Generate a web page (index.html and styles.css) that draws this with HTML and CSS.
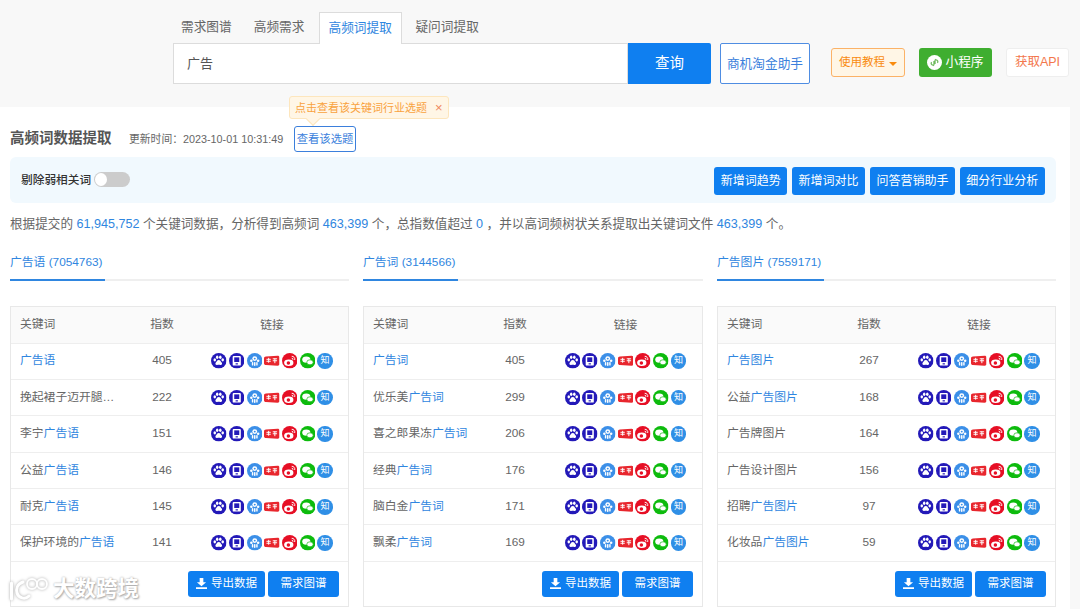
FILE: index.html
```html
<!DOCTYPE html>
<html lang="zh">
<head>
<meta charset="utf-8">
<title>高频词数据提取</title>
<link rel="stylesheet" href="styles.css">
</head>
<body>
<svg class="defs">
  <symbol id="i-baidu" viewBox="0 0 16 16"><circle cx="8" cy="8" r="8" fill="#2319b8"/><g fill="#fff"><ellipse cx="3.900" cy="7" rx="1.300" ry="1.700"/><ellipse cx="6.400" cy="4.400" rx="1.300" ry="1.800"/><ellipse cx="9.600" cy="4.400" rx="1.300" ry="1.800"/><ellipse cx="12.100" cy="7" rx="1.300" ry="1.700"/><path d="M8 7.300c-1.600 0-2 1.500-3 2.500-1 1.200-.2 2.700 1.300 2.500.7-.1 1.200-.3 1.700-.3s1 .2 1.700.3c1.500.2 2.300-1.300 1.300-2.500-1-1-1.400-2.500-3-2.500z"/></g></symbol>
  <symbol id="i-phone" viewBox="0 0 16 16"><circle cx="8" cy="8" r="8" fill="#2319b8"/><rect x="3.800" y="3" width="8.400" height="10" rx="1" fill="#fff"/><rect x="5.400" y="4.500" width="5.200" height="4.800" fill="#2319b8"/><rect x="6.800" y="10.600" width="2.400" height="1.200" fill="#2319b8"/></symbol>
  <symbol id="i-so" viewBox="0 0 16 16"><circle cx="8" cy="8" r="8" fill="#3b8fe8"/><g fill="#fff"><circle cx="8" cy="5.800" r="2.500"/><circle cx="4.500" cy="8" r="1.300"/><circle cx="11.500" cy="8" r="1.300"/><rect x="5" y="9.400" width="1.500" height="3.600" rx=".7"/><rect x="7.250" y="9.400" width="1.500" height="4" rx=".7"/><rect x="9.500" y="9.400" width="1.500" height="3.600" rx=".7"/></g><circle cx="8" cy="5.800" r="1" fill="#3b8fe8"/></symbol>
  <symbol id="i-tt" viewBox="0 0 16 16"><path d="M2 3.500 14 2.800c1.200 0 2 .7 2 1.800v6.800c0 1.100-.8 1.800-2 1.800L2 12.500C.8 12.400 0 11.700 0 10.600V5.400C0 4.300.8 3.600 2 3.500z" fill="#e8262d"/><rect x="2.500" y="6" width="4.500" height="1" fill="#fff"/><rect x="2.500" y="8" width="4.500" height="1" fill="#fff"/><rect x="4.300" y="5" width="1" height="5" fill="#fff"/><rect x="9" y="5.500" width="4.500" height="1" fill="#fff"/><rect x="9" y="7.500" width="4.500" height="1" fill="#fff"/><rect x="10.700" y="5.500" width="1" height="5" fill="#fff"/></symbol>
  <symbol id="i-weibo" viewBox="0 0 16 16"><circle cx="8" cy="8" r="8" fill="#e60f25"/><ellipse cx="7" cy="10" rx="4.800" ry="3.300" fill="#fff"/><circle cx="6.600" cy="10.200" r="1.800" fill="#e60f25"/><path d="M10 3.400a3 3 0 0 1 3.100 3.800M10 5.400a1.300 1.300 0 0 1 1.300 1.600" stroke="#fff" stroke-width="1" fill="none"/></symbol>
  <symbol id="i-wx" viewBox="0 0 16 16"><circle cx="8" cy="8" r="8" fill="#0dbb0d"/><ellipse cx="6.500" cy="6.800" rx="4.200" ry="3.300" fill="#fff"/><ellipse cx="10.300" cy="9.600" rx="3.300" ry="2.600" fill="#fff" stroke="#0dbb0d" stroke-width=".7"/></symbol>
  <symbol id="i-download" viewBox="0 0 12 12"><path d="M4 0h4v4.500h3L6 9 1 4.500h3zM0 10.200h12V12H0z" fill="#fff"/></symbol>
</svg>

<header class="top">
  <div class="top-inner">
    <div class="search-col">
      <nav class="tabs">
        <span class="tab">需求图谱</span>
        <span class="tab">高频需求</span>
        <span class="tab tab-on">高频词提取</span>
        <span class="tab tab-last">疑问词提取</span>
      </nav>
      <div class="search">
        <div class="search-input">广告</div>
        <div class="search-btn">查询</div>
      </div>
    </div>
    <div class="helper">商机淘金助手</div>
    <div class="tools">
      <span class="tool tool-orange">使用教程<i class="caret"></i></span>
      <span class="tool tool-green"><svg class="mini" viewBox="0 0 14 14"><circle cx="7" cy="7" r="7" fill="#fff"/><path d="M5.500 9.500a1.700 1.700 0 0 1-1.200-2.800M6.500 5.500v3.400a1.600 1.600 0 0 1-1 1M7.500 8.500V5.100a1.600 1.600 0 0 1 1-1M8.500 4.500a1.700 1.700 0 0 1 1.200 2.800" stroke="#6fba5f" stroke-width="1.200" fill="none"/></svg>小程序</span>
      <span class="tool tool-api">获取API</span>
    </div>
  </div>
</header>

<main class="panel">
  <div class="tip">点击查看该关键词行业选题<span class="tip-x">×</span></div>
  <div class="title-row">
    <h1 class="title">高频词数据提取</h1>
    <span class="updated">更新时间：2023-10-01 10:31:49</span>
    <span class="topic-btn">查看该选题</span>
  </div>
  <div class="filter">
    <div class="filter-left"><b class="filter-label">剔除弱相关词</b><span class="switch"></span></div>
    <div class="filter-right">
      <span class="btn">新增词趋势</span><span class="btn">新增词对比</span><span class="btn">问答营销助手</span><span class="btn">细分行业分析</span>
    </div>
  </div>
  <p class="summary">根据提交的 <a>61,945,752</a> 个关键词数据，分析得到高频词 <a>463,399</a> 个，总指数值超过 <a>0</a> ，并以高词频树状关系提取出关键词文件 <a>463,399</a> 个。</p>

  <div class="cols" id="cols"></div>
</main>

<div class="mark"><svg class="mark-logo" viewBox="0 0 40 24"><g fill="none" stroke="#fff" stroke-linecap="round"><path d="M2.500 6v16" stroke-width="3"/><path d="M14 5C8 7 7 12 8 16c1.500 5 8 7 12 3" stroke-width="3"/><circle cx="23" cy="7" r="5" stroke-width="1.800"/><circle cx="33" cy="7" r="5" stroke-width="1.800"/></g></svg><span>大数跨境</span></div>

<script src="app.js"></script>
</body>
</html>
```
FILE: app.js
```js
var data = [
  { tab: '广告语 (7054763)', rows: [
    [['广告语', 1], 405], [['挽起裙子迈开腿…', 0], 222], [['李宁', 0, '广告语', 1], 151],
    [['公益', 0, '广告语', 1], 146], [['耐克', 0, '广告语', 1], 145], [['保护环境的', 0, '广告语', 1], 141]
  ]},
  { tab: '广告词 (3144566)', rows: [
    [['广告词', 1], 405], [['优乐美', 0, '广告词', 1], 299], [['喜之郎果冻', 0, '广告词', 1], 206],
    [['经典', 0, '广告词', 1], 176], [['脑白金', 0, '广告词', 1], 171], [['飘柔', 0, '广告词', 1], 169]
  ]},
  { tab: '广告图片 (7559171)', rows: [
    [['广告图片', 1], 267], [['公益', 0, '广告图片', 1], 168], [['广告牌图片', 0], 164],
    [['广告设计图片', 0], 156], [['招聘', 0, '广告图片', 1], 97], [['化妆品', 0, '广告图片', 1], 59]
  ]}
];
var ids = ['i-baidu', 'i-phone', 'i-so', 'i-tt', 'i-weibo', 'i-wx'];
var icons = ids.map(function (id) {
  return '<svg class="ic"><use href="#' + id + '"/></svg>';
}).join('') + '<span class="ic ic-zhi">知</span>';

document.getElementById('cols').innerHTML = data.map(function (c) {
  var rows = c.rows.map(function (r) {
    var word = '';
    for (var i = 0; i < r[0].length; i += 2) {
      word += r[0][i + 1] ? '<a>' + r[0][i] + '</a>' : r[0][i];
    }
    return '<div class="row"><div class="c-word">' + word + '</div><div class="c-num">' + r[1] +
      '</div><div class="c-links">' + icons + '</div></div>';
  }).join('');
  return '<section class="col">' +
    '<div class="col-tabs"><span class="col-tab">' + c.tab + '</span></div>' +
    '<div class="table">' +
    '<div class="row row-head"><div class="c-word">关键词</div><div class="c-num">指数</div><div class="c-links c-links-head">链接</div></div>' +
    rows +
    '<div class="table-foot"><span class="btn btn-foot btn-export"><svg class="dl"><use href="#i-download"/></svg>导出数据</span><span class="btn btn-foot">需求图谱</span></div>' +
    '</div></section>';
}).join('');
```
FILE: styles.css
```css
* { box-sizing: border-box; }
html, body { margin: 0; height: 100%; }
body {
  width: 1080px;
  height: 609px;
  overflow: hidden;
  position: relative;
  background: #f8f8f8;
  color: #666;
  font: 12px/1.5 "Liberation Sans", "Noto Sans CJK SC", sans-serif;
}
a { color: #2f86e0; }
.defs { display: none; }

.top { height: 107px; padding: 12px 0 0 173px; }
.top-inner { display: flex; align-items: flex-start; }
.search-col { width: 538px; }
.tabs { display: flex; gap: 2px; height: 31px; margin-left: -2px; }
.tab {
  padding: 0 10px;
  font-size: 12.700px;
  line-height: 30px;
  color: #666;
}
.tab-on {
  background: #fff;
  color: #2f86e0;
  border: 1px solid #dcdcdc;
  border-bottom: 0;
  padding: 0 9px;
  line-height: 31px;
  margin-left: 2px;
  position: relative;
  z-index: 1;
  height: 32px;
}
.tab-last { margin-left: 1.500px; }
.search { display: flex; height: 41px; }
.search-input {
  flex: 1;
  background: #fff;
  border: 1px solid #dcdcdc;
  padding-left: 13px;
  font-size: 13px;
  line-height: 40px;
  color: #555;
}
.search-btn {
  width: 83px;
  background: #0f7ff0;
  border-radius: 0 2px 2px 0;
  color: #fff;
  font-size: 14.500px;
  line-height: 40px;
  text-align: center;
}
.helper {
  margin: 31px 0 0 9px;
  width: 90px;
  height: 41px;
  border: 1px solid #4f8de2;
  border-radius: 2px;
  background: #fff;
  color: #3b7fdc;
  font-size: 12.700px;
  line-height: 40px;
  text-align: center;
  white-space: nowrap;
}
.tools { display: flex; align-items: center; margin: 36px 0 0 21px; }
.tool {
  display: flex;
  align-items: center;
  justify-content: center;
  height: 29px;
  border-radius: 3px;
}
.tool-orange {
  width: 74px;
  background: #fff6e6;
  border: 1px solid #fbb267;
  color: #f98b0e;
  font-size: 11.500px;
}
.caret {
  margin: 2px 0 0 4px;
  border: 4px solid transparent;
  border-top-color: #f98b0e;
  border-bottom: 0;
}
.tool-green {
  width: 73px;
  margin-left: 14px;
  background: #3fae30;
  color: #fff;
  font-size: 12.700px;
}
.mini { width: 15px; height: 15px; margin-right: 3px; }
.tool-api {
  width: 63px;
  margin-left: 14px;
  background: #fff;
  border: 1px solid #eee;
  color: #f3774c;
  font-size: 12.500px;
}

.panel {
  position: relative;
  width: 1070px;
  height: 502px;
  background: #fff;
  padding: 19px 14px 0 10px;
}
.tip {
  position: absolute;
  left: 289px;
  top: -11px;
  width: 160px;
  height: 23px;
  padding-left: 5px;
  border: 1px solid #fde6bd;
  border-radius: 3px;
  background: #fff6e6;
  color: #f9a23e;
  font-size: 11px;
  line-height: 21px;
  white-space: nowrap;
}
.tip::after {
  content: "";
  position: absolute;
  left: 18px;
  bottom: -6px;
  width: 9px;
  height: 9px;
  background: #fff6e6;
  border-right: 1px solid #fde6bd;
  border-bottom: 1px solid #fde6bd;
  transform: rotate(45deg);
}
.tip-x { margin-left: 8px; font-size: 13px; color: #f08a5d; }
.title-row { display: flex; align-items: center; height: 26px; }
.title {
  margin: 0;
  width: 119px;
  font-size: 14.500px;
  font-weight: 700;
  color: #555;
}
.updated { width: 165px; font-size: 10.800px; white-space: nowrap; }
.topic-btn {
  width: 62px;
  height: 26px;
  border: 1px solid #3b7fdc;
  border-radius: 3px;
  color: #3b7fdc;
  font-size: 11.300px;
  line-height: 24px;
  text-align: center;
  white-space: nowrap;
}
.filter {
  display: flex;
  align-items: center;
  justify-content: space-between;
  height: 46px;
  margin-top: 5px;
  padding: 0 11px;
  border-radius: 6px;
  background: #f1f9fe;
}
.filter-left { display: flex; align-items: center; }
.filter-label { color: #333; font-size: 11.700px; font-weight: 500; }
.switch {
  position: relative;
  width: 36px;
  height: 15px;
  margin-left: 3px;
  border-radius: 8px;
  background: #ccc;
}
.switch::before {
  content: "";
  position: absolute;
  left: 1px;
  top: 1px;
  width: 12px;
  height: 13px;
  border-radius: 50%;
  background: #fff;
}
.filter-right { display: flex; gap: 4.500px; padding-top: 1px; }
.btn {
  display: inline-flex;
  align-items: center;
  justify-content: center;
  height: 28px;
  padding: 0 6.700px;
  border-radius: 3px;
  background: #0f7ff0;
  color: #fff;
  white-space: nowrap;
}
.summary { margin: 10px 0 0; font-size: 12.600px; line-height: 22px; color: #666; white-space: nowrap; }

.cols { display: flex; gap: 14px; margin-top: 18px; }
.col { width: 339px; }
.col:nth-child(2) { width: 340px; }
.col-tabs { height: 28px; border-bottom: 2px solid #efefef; }
.col-tab {
  display: inline-block;
  height: 28px;
  padding-right: 3px;
  border-bottom: 2px solid #2f86e0;
  color: #2f86e0;
  font-size: 11.800px;
  line-height: 18px;
  white-space: nowrap;
}
.table { margin-top: 25px; border: 1px solid #e8e8e8; height: 301px; font-size: 11.800px; }
.row {
  display: flex;
  align-items: center;
  height: 36.400px;
  border-bottom: 1px solid #eee;
}
.row-head { height: 36.500px; background: #fafafa; }
.c-word { width: 126px; padding-left: 9px; white-space: nowrap; overflow: hidden; }
.c-num { width: 50px; text-align: center; }
.c-links { flex: 1; display: flex; justify-content: center; gap: 2.200px; padding-left: 9px; }
.c-links-head { padding-top: 3px; }
.ic { display: block; width: 15.500px; height: 15.500px; flex: none; }
.ic-zhi {
  border-radius: 50%;
  background: #2f8fe6;
  color: #fff;
  font-size: 9px;
  line-height: 15.500px;
  text-align: center;
}
.table-foot { display: flex; justify-content: flex-end; gap: 3px; padding: 9px 9px 0 0; }
.btn-foot { height: 26px; width: 71px; padding: 0; font-size: 11.500px; }
.btn-export { width: 77px; }
.dl { width: 11px; height: 11px; margin-right: 4px; }

.mark {
  position: absolute;
  left: 9px;
  bottom: 8px;
  display: flex;
  align-items: center;
  color: #fff;
  font-size: 21.500px;
  font-weight: 700;
  line-height: 24px;
  text-shadow: 0 0 2px #aaa, 1px 1px 2px #aaa;
}
.mark-logo { width: 40px; height: 24px; margin-right: 4px; filter: drop-shadow(0 0 1.500px #aaa); }
```
